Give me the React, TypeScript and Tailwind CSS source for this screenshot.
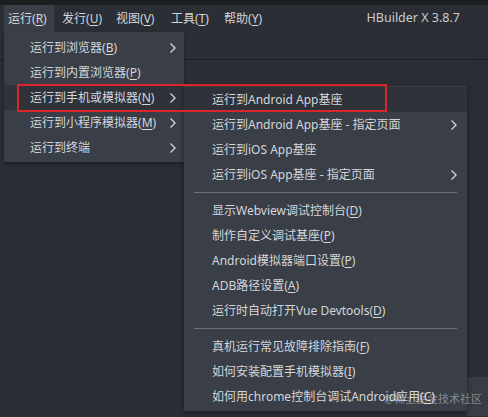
import React from 'react';

const Chevron = () => (
  <svg width="8" height="12" viewBox="0 0 8 12" className="text-[#cfd2d7]">
    <polyline points="1.5,1.5 6,6 1.5,10.5" fill="none" stroke="currentColor" strokeWidth="1.4" />
  </svg>
);

const Label = ({ text, k }: { text: string; k?: string }) => (
  <span className="whitespace-nowrap">
    {text}
    {k && (
      <>
        (<span className="underline underline-offset-2">{k}</span>)
      </>
    )}
  </span>
);

type Item = { text: string; k?: string; sub?: boolean; active?: boolean } | 'sep';

const runMenu: Item[] = [
  { text: '运行到浏览器', k: 'B', sub: true },
  { text: '运行到内置浏览器', k: 'P' },
  { text: '运行到手机或模拟器', k: 'N', sub: true, active: true },
  { text: '运行到小程序模拟器', k: 'M', sub: true },
  { text: '运行到终端', sub: true },
];

const phoneMenu: Item[] = [
  { text: '运行到Android App基座', active: true },
  { text: '运行到Android App基座 - 指定页面', sub: true },
  { text: '运行到iOS App基座' },
  { text: '运行到iOS App基座 - 指定页面', sub: true },
  'sep',
  { text: '显示Webview调试控制台', k: 'D' },
  { text: '制作自定义调试基座', k: 'P' },
  { text: 'Android模拟器端口设置', k: 'P' },
  { text: 'ADB路径设置', k: 'A' },
  { text: '运行时自动打开Vue Devtools', k: 'D' },
  'sep',
  { text: '真机运行常见故障排除指南', k: 'F' },
  { text: '如何安装配置手机模拟器', k: 'I' },
  { text: '如何用chrome控制台调试Android应用', k: 'C' },
];

const MenuList = ({ items, padLeft, chevronRight }: { items: Item[]; padLeft: string; chevronRight: string }) => (
  <div className="flex flex-col">
    {items.map((it, i) =>
      it === 'sep' ? (
        <div key={i} className="h-[11px] flex items-center px-[10px]">
          <div className="h-px w-full bg-[#6a6e76]" />
        </div>
      ) : (
        <div
          key={i}
          className={`h-[25px] flex items-center justify-between ${padLeft} ${chevronRight} ${
            it.active ? 'bg-[#2f3239]' : ''
          }`}
        >
          <Label text={it.text} k={it.k} />
          {it.sub && <Chevron />}
        </div>
      )
    )}
  </div>
);

export default function App() {
  const font = { fontFamily: '"Noto Sans", "Noto Sans CJK SC", sans-serif' };
  return (
    <div
      className="relative w-[488px] h-[417px] overflow-hidden bg-[#2c2f36] text-[12px] text-[#d3d6db]"
      style={font}
    >
      <div className="h-[5px] bg-[#1d1e22]" />
      <div className="h-[27px] flex items-center bg-[#2b2e35] pl-[4px] pr-[28px]">
        <div className="h-full w-[50px] flex items-center pl-[4px] bg-[#3a3e46]">
          <Label text="运行" k="R" />
        </div>
        <div className="w-[54px] pl-[8px]"><Label text="发行" k="U" /></div>
        <div className="w-[55px] pl-[8px]"><Label text="视图" k="V" /></div>
        <div className="w-[53px] pl-[8px]"><Label text="工具" k="T" /></div>
        <div className="pl-[8px]"><Label text="帮助" k="Y" /></div>
        <div className="ml-auto text-[#c9ccd1] text-[12.5px]">HBuilder X 3.8.7</div>
      </div>
      <div className="h-[28px] bg-[#2b2e35] border-b border-[#1e2024]" />
      <div className="flex h-[356px]">
        <div className="flex-1 bg-[#2b2e35]" />
        <div className="w-[21px] flex flex-col">
          <div className="h-[317px] bg-[#2a2d33]" />
          <div className="flex-1 bg-[#383c43]" />
        </div>
      </div>

      {/* 运行 menu */}
      <div className="absolute left-[4px] top-[32px] w-[180px] pt-[3px] pb-[2px] bg-[#3a3e46] shadow-[0_2px_4px_rgba(0,0,0,0.35)]">
        <MenuList items={runMenu} padLeft="pl-[26px]" chevronRight="pr-[7px]" />
      </div>

      {/* 手机或模拟器 submenu */}
      <div className="absolute left-[184px] top-[86px] w-[283px] pt-[1px] pb-[2px] bg-[#3a3e46] shadow-[0_2px_6px_rgba(0,0,0,0.4)]">
        <MenuList items={phoneMenu} padLeft="pl-[28px]" chevronRight="pr-[9px]" />
      </div>

      {/* highlight box */}
      <div className="absolute left-[17px] top-[84px] w-[370px] h-[28px] border-2 border-[#d9262b]" />

      {/* watermark */}
      <div className="absolute left-[384px] top-[391px] whitespace-nowrap text-[11px] text-white/40">@稀土掘金技术社区</div>
    </div>
  );
}
